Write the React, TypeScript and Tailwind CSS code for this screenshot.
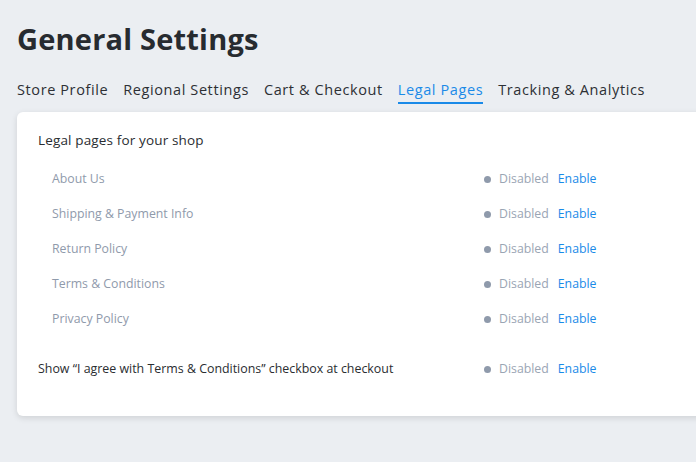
const tabs = ["Store Profile", "Regional Settings", "Cart & Checkout", "Legal Pages", "Tracking & Analytics"];
const pages = ["About Us", "Shipping & Payment Info", "Return Policy", "Terms & Conditions", "Privacy Policy"];

function Status() {
	return (
		<div className="flex items-center text-[12.3px]">
			<span className="w-[7px] h-[7px] rounded-full bg-[#8f9aab] mr-[8px]" />
			<span className="text-[#9aa5b4]">Disabled</span>
			<a className="ml-[9px] text-[#1a8ae8] cursor-pointer">Enable</a>
		</div>
	);
}

export default function App() {
	return (
		<div className="min-h-[462px] bg-[#ebeef2] overflow-hidden font-['Open_Sans',sans-serif]">
			<div className="pl-[17px] pt-[21px]">
				<h1 className="text-[29px] leading-[36px] font-bold text-[#272b30] tracking-[0.2px]">General Settings</h1>

				{/* tabs */}
				<div className="flex gap-[15px] mt-[22px] text-[14.5px] text-[#2d3035] tracking-[0.6px]">
					{tabs.map((t) => (
						<div
							key={t}
							className={
								t === "Legal Pages"
									? "pb-[1px] border-b-2 border-[#1a8ae8] text-[#1a8ae8]"
									: "pb-[1px] border-b-2 border-transparent"
							}
						>
							{t}
						</div>
					))}
				</div>

				{/* card */}
				<div className="mt-[8px] w-[720px] bg-white rounded-[6px] shadow-[0_2px_6px_rgba(0,0,0,0.12)] pl-[21px] pt-[18px] pb-[29px]">
					<div className="text-[13.5px] text-[#2a2d31] leading-[20px] tracking-[0.15px]">Legal pages for your shop</div>
					<div className="mt-[12px]">
						{pages.map((p) => (
							<div key={p} className="flex items-center h-[35px]">
								<div className="w-[446px] pl-[14px] text-[12.3px] text-[#8f9aab]">{p}</div>
								<Status />
							</div>
						))}
					</div>
					<div className="flex items-center h-[35px] mt-[15px]">
						<div className="w-[446px] text-[12.4px] text-[#2a2d31]">
							Show “I agree with Terms &amp; Conditions” checkbox at checkout
						</div>
						<Status />
					</div>
				</div>
			</div>
		</div>
	);
}
